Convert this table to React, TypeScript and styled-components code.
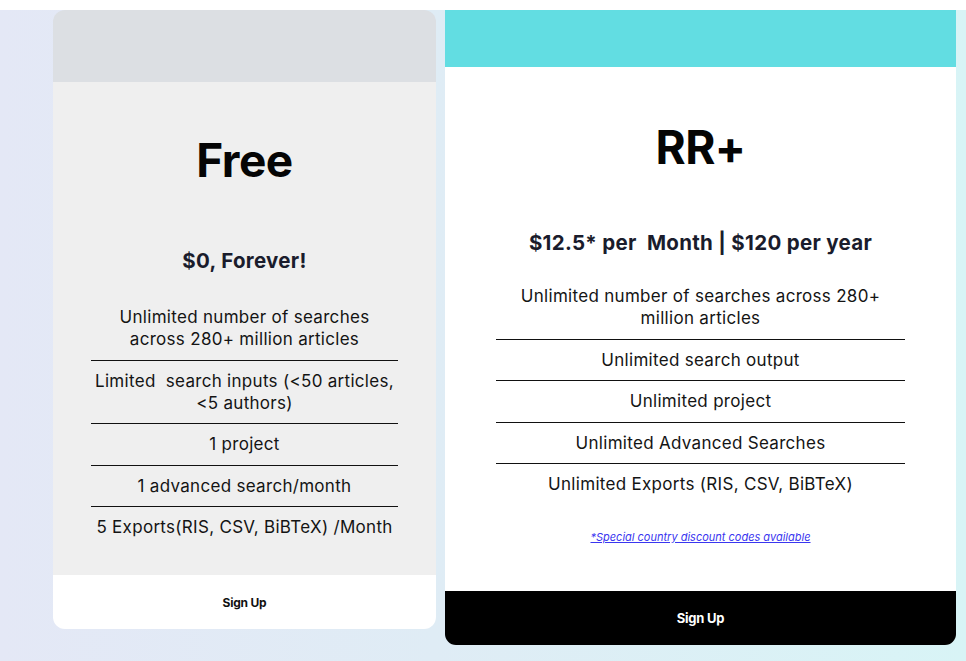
import React from 'react';
import styled, { createGlobalStyle } from 'styled-components';

const GlobalStyle = createGlobalStyle`
  html, body {
    margin: 0;
    padding: 0;
    background: #ffffff;
  }
  body {
    font-family: Inter, 'Liberation Sans', sans-serif;
    color: #111111;
  }
`;

const Page = styled.div`
  padding-top: 10px;
  width: 966px;
  height: 661px;
  box-sizing: border-box;
  overflow: hidden;
`;

const Section = styled.section`
  height: 651px;
  display: flex;
  align-items: flex-start;
  gap: 9px;
  padding-left: 53px;
  background: linear-gradient(90deg, #e4e8f6 0%, #dfecf5 45%, #d8f4f6 100%);
`;

const Card = styled.div<{ $wide?: boolean }>`
  width: ${(p) => (p.$wide ? '511px' : '383px')};
  display: flex;
  flex-direction: column;
  border-radius: ${(p) => (p.$wide ? '0 0 11px 11px' : '12px')};
  overflow: hidden;
`;

const CardHeader = styled.div<{ $wide?: boolean }>`
  height: ${(p) => (p.$wide ? '57px' : '72px')};
  background: ${(p) => (p.$wide ? '#62dde2' : '#dcdfe3')};
`;

const CardBody = styled.div<{ $wide?: boolean }>`
  display: flex;
  flex-direction: column;
  align-items: center;
  background: ${(p) => (p.$wide ? '#ffffff' : '#efefef')};
  padding: ${(p) => (p.$wide ? '52px 51px 47px' : '50px 38px 27px')};
`;

const PlanName = styled.h2`
  margin: 0;
  font-size: 46px;
  line-height: 56px;
  font-weight: 700;
  color: #050505;
  letter-spacing: -0.5px;
`;

const Price = styled.div<{ $gap: number }>`
  margin-top: ${(p) => p.$gap}px;
  font-size: 20.5px;
  line-height: 26px;
  font-weight: 700;
  color: #1a1c2c;
  letter-spacing: 0.3px;
  white-space: pre;
`;

const FeatureList = styled.ul<{ $gap: number }>`
  list-style: none;
  margin: ${(p) => p.$gap}px 0 0;
  padding: 0;
  width: 100%;
`;

const Feature = styled.li`
  padding: 9px 0 9.5px;
  font-size: 17px;
  line-height: 22px;
  text-align: center;
  color: #141414;
  letter-spacing: 0.3px;
  border-bottom: 1px solid #111111;

  &:last-child {
    border-bottom: none;
    padding-bottom: 10px;
  }
`;

const Note = styled.a`
  margin-top: 25px;
  font-size: 11px;
  line-height: 14px;
  font-style: italic;
  color: #3a36f0;
  text-decoration: underline;
`;

const CardFooter = styled.button<{ $dark?: boolean }>`
  height: 54px;
  border: none;
  background: ${(p) => (p.$dark ? '#000000' : '#ffffff')};
  color: ${(p) => (p.$dark ? '#ffffff' : '#111111')};
  font-family: Inter, 'Liberation Sans', sans-serif;
  font-size: ${(p) => (p.$dark ? '13px' : '12px')};
  font-weight: 700;
  letter-spacing: -0.2px;
  cursor: pointer;
`;

const freeFeatures = [
  'Unlimited number of searches across 280+ million articles',
  'Limited\u00a0 search inputs (<50 articles, <5 authors)',
  '1 project',
  '1 advanced search/month',
  '5 Exports(RIS, CSV, BiBTeX) /Month',
];

const plusFeatures = [
  'Unlimited number of searches across 280+ million articles',
  'Unlimited search output',
  'Unlimited project',
  'Unlimited Advanced Searches',
  'Unlimited Exports (RIS, CSV, BiBTeX)',
];

const App: React.FC = () => {
  return (
    <Page>
      <GlobalStyle />
      <Section>
        <Card>
          <CardHeader />
          <CardBody>
            <PlanName>Free</PlanName>
            <Price $gap={60}>$0, Forever!</Price>
            <FeatureList $gap={23}>
              {freeFeatures.map((f) => (
                <Feature key={f}>{f}</Feature>
              ))}
            </FeatureList>
          </CardBody>
          <CardFooter>Sign Up</CardFooter>
        </Card>

        <Card $wide>
          <CardHeader $wide />
          <CardBody $wide>
            <PlanName>RR+</PlanName>
            <Price $gap={55}>{'$12.5* per  Month | $120 per year'}</Price>
            <FeatureList $gap={20}>
              {plusFeatures.map((f) => (
                <Feature key={f}>{f}</Feature>
              ))}
            </FeatureList>
            <Note href="#">*Special country discount codes available</Note>
          </CardBody>
          <CardFooter $dark>Sign Up</CardFooter>
        </Card>
      </Section>
    </Page>
  );
};

export default App;
